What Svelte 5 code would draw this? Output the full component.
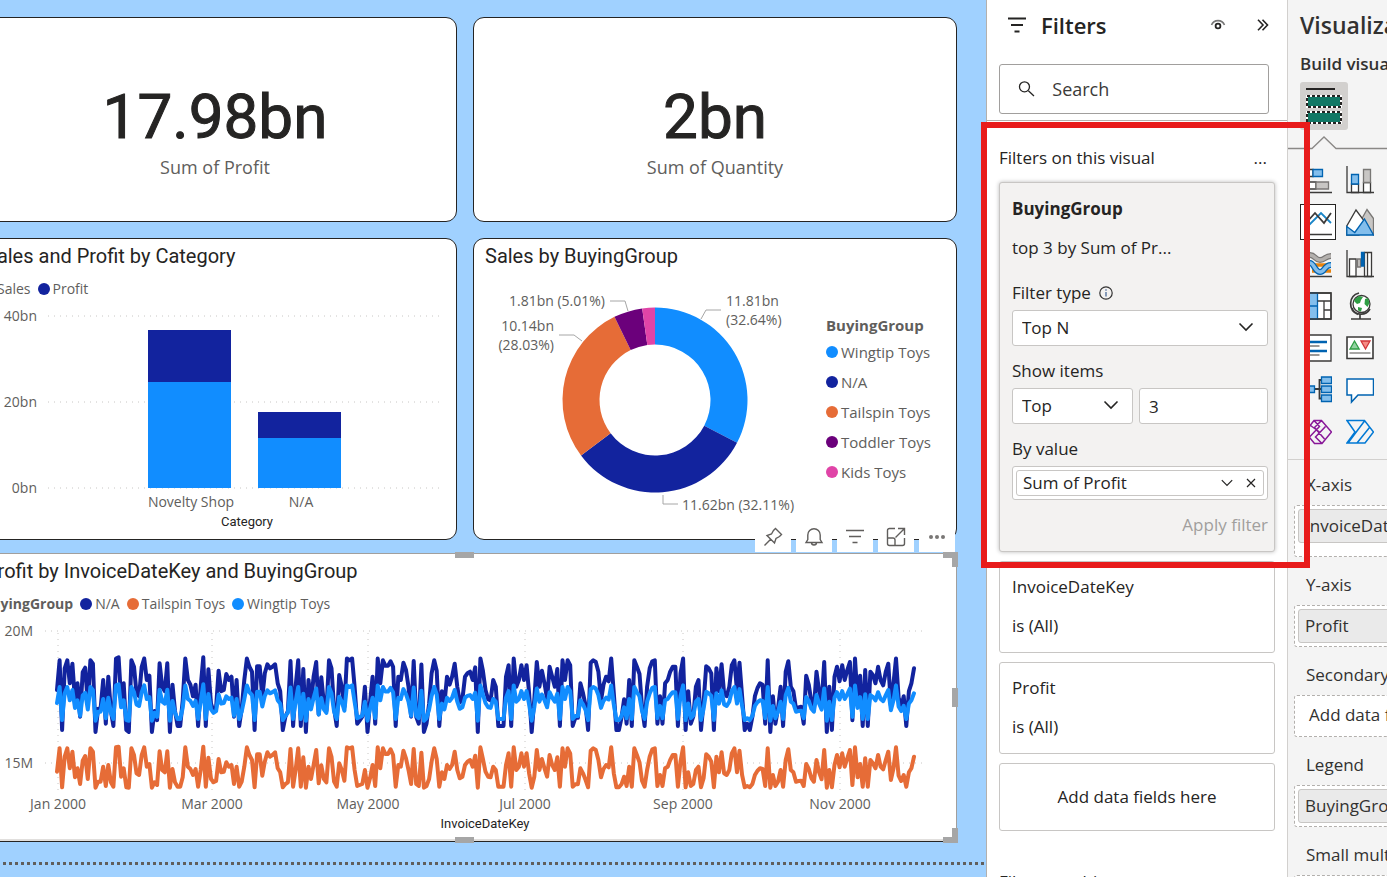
<script>
  const sky = '#118dff';
  const navy = '#12239e';
  const orange = '#e66c37';
  const purple = '#6b007b';
  const pink = '#e044a7';

  const barTicks = [
    { label: '40bn', y: 16 },
    { label: '20bn', y: 102 },
    { label: '0bn', y: 188 }
  ];
  const bars = [
    { label: 'Novelty Shop', x: 174, top: 30, split: 82 },
    { label: 'N/A', x: 284, top: 112, split: 138 }
  ];

  const groups = [
    { name: 'Wingtip Toys', share: 32.64, color: sky },
    { name: 'N/A', share: 32.11, color: navy },
    { name: 'Tailspin Toys', share: 28.03, color: orange },
    { name: 'Toddler Toys', share: 5.01, color: purple },
    { name: 'Kids Toys', share: 2.21, color: pink }
  ];

  function donutSlices(items, cx, cy, outer, inner) {
    let start = 0;
    return items.map((g) => {
      const end = start + g.share / 100;
      const at = (t, r) =>
        `${(cx + r * Math.sin(t * 2 * Math.PI)).toFixed(2)},${(cy - r * Math.cos(t * 2 * Math.PI)).toFixed(2)}`;
      const d = `M${at(start, outer)}A${outer},${outer} 0 0 1 ${at(end, outer)}L${at(end, inner)}A${inner},${inner} 0 0 0 ${at(start, inner)}Z`;
      start = end;
      return { d, color: g.color };
    });
  }
  const slices = donutSlices(groups, 181, 130, 92.5, 55.5);

  // One reading per day; higher means lower profit.
  const daily = [
    695,625,742,650,625,685,635,712,685,732,662,648,717,625,635,743,725,725,680,738,675,727,740,622,620,710,685,742,743,625,
    645,700,705,645,622,680,672,743,727,735,634,690,697,634,743,687,727,740,740,712,622,680,687,705,687,740,690,620,740,653,
    717,727,723,657,697,695,667,680,675,732,680,740,725,680,622,645,660,742,643,643,707,665,637,650,645,637,685,697,742,732,
    727,627,740,690,625,740,652,743,680,717,675,630,730,676,717,727,625,650,725,740,670,690,722,622,625,622,690,738,735,732,
    690,743,715,675,738,622,685,625,642,642,628,645,740,675,680,632,655,690,732,627,732,738,638,743,738,717,665,625,657,740,
    697,717,675,687,675,635,690,715,710,675,665,660,680,647,743,622,657,695,710,712,680,690,740,740,740,675,640,740,622,690,
    680,640,680,640,700,743,710,630,690,657,685,710,645,675,690,652,740,625,680,625,640,740,733,733,685,700,720,742,632,625,
    630,660,712,687,675,682,622,700,742,742,733,710,738,680,740,625,645,667,722,740,690,650,628,625,738,705,738,685,680,660,
    645,645,740,665,622,742,697,738,732,690,680,742,715,643,650,665,742,650,697,637,700,705,690,640,625,697,632,705,742,738,
    742,732,705,692,685,687,738,625,743,705,738,725,690,740,660,628,690,697,725,723,722,738,672,687,715,725,660,697,718,630,
    743,690,742,675,645,682,640,680,655,630,735,622,712,672,740,655,740,660,670,685,645,680,688,660,635,720,685,622,707,723,
    705,740,697,685,650
  ];
  const base = [620, 625, 635, 650, 675, 695, 710, 725, 732, 740, 743];
  const curves = {
    navy: [352, 361, 371, 385, 410, 450, 478, 506, 530, 558, 576],
    sky: [433, 441, 450, 460, 473, 489, 502, 515, 527, 537, 542]
  };
  function lookup(v, ys) {
    let i = 1;
    while (i < base.length - 1 && v > base[i]) i++;
    const t = (v - base[i - 1]) / (base[i] - base[i - 1]);
    return ys[i - 1] + t * (ys[i] - ys[i - 1]);
  }
  function trace(ys) {
    const step = 857 / (daily.length - 1);
    return daily
      .map((v, i) => `${(83 + i * step).toFixed(1)},${(lookup(v, ys) / 3 - 80).toFixed(1)}`)
      .join(' ');
  }
  const lines = [
    { color: navy, points: trace(curves.navy) },
    { color: orange, points: trace(base) },
    { color: sky, points: trace(curves.sky) }
  ];
  const months = [
    { label: 'Jan 2000', x: 84 },
    { label: 'Mar 2000', x: 238 },
    { label: 'May 2000', x: 394 },
    { label: 'Jul 2000', x: 551 },
    { label: 'Sep 2000', x: 709 },
    { label: 'Nov 2000', x: 866 }
  ];

  const wells = [
    { label: 'X-axis', chip: 'InvoiceDateKey', tall: true },
    { label: 'Y-axis', chip: 'Profit' },
    { label: 'Secondary y-axis' },
    { label: 'Legend', chip: 'BuyingGroup' },
    { label: 'Small multiples' }
  ];
  const visuals = [
    'Stacked bar chart', 'Stacked column chart', 'Line chart', 'Area chart', 'Ribbon chart', 'Waterfall chart', 'Treemap',
    'Map', 'Narrative', 'KPI', 'Decomposition tree', 'Q&A', 'Power Apps', 'Power Automate'
  ];

  let filterType = $state('Top N');
  let direction = $state('Top');
  let count = $state('3');
  let query = $state('');
  let picked = $state(2);
</script>

{#snippet chevron()}
  <svg class="chevron" width="16" height="10" viewBox="0 0 16 10" aria-hidden="true"><path d="M1.5 1.5 8 8l6.500-6.500" /></svg>
{/snippet}

<div class="app">
  <main class="report">
    <div class="board">
      <div class="pair">
        <section class="card kpi"><strong>17.98bn</strong><span>Sum of Profit</span></section>
        <section class="card kpi"><strong>2bn</strong><span>Sum of Quantity</span></section>
      </div>

      <div class="pair charts">
        <section class="card">
          <h2>Sales and Profit by Category</h2>
          <ul class="legend">
            <li><i style:background={sky}></i>Sales</li>
            <li><i style:background={navy}></i>Profit</li>
          </ul>
          <svg class="plot bars" height="236" viewBox="0 0 482 236" role="img" aria-label="Sales and Profit by Category">
            {#each barTicks as t}
              <line class="grid" x1="74" x2="468" y1={t.y} y2={t.y} />
              <text class="tick" x="63" y={t.y + 5} text-anchor="end">{t.label}</text>
            {/each}
            {#each bars as b}
              <rect x={b.x} y={b.top} width="83" height={b.split - b.top} fill={navy} />
              <rect x={b.x} y={b.split} width="83" height={188 - b.split} fill={sky} />
              <text class="tick" x={b.x + 43} y="207" text-anchor="middle">{b.label}</text>
            {/each}
            <text class="axis" x="273" y="226" text-anchor="middle">Category</text>
          </svg>
        </section>

        <section class="card">
          <h2>Sales by BuyingGroup</h2>
          <div class="donut">
            <svg class="plot" height="264" viewBox="0 0 345 264" role="img" aria-label="Sales by BuyingGroup">
              {#each slices as s}<path d={s.d} fill={s.color} />{/each}
              <g class="lead">
                <path d="M136 31h15l3 10" /><path d="M85 65h15l8 6" /><path d="M247 40h-15l-5 9" /><path d="M189 225v9h15" />
              </g>
              <text class="tick" x="131" y="36" text-anchor="end">1.81bn (5.01%)</text>
              <text class="tick" x="80" y="61" text-anchor="end">10.14bn</text>
              <text class="tick" x="80" y="80" text-anchor="end">(28.03%)</text>
              <text class="tick" x="252" y="36">11.81bn</text>
              <text class="tick" x="252" y="55">(32.64%)</text>
              <text class="tick" x="208" y="240">11.62bn (32.11%)</text>
            </svg>
            <div class="side">
              <b>BuyingGroup</b>
              <ul>
                {#each groups as g}<li><i style:background={g.color}></i>{g.name}</li>{/each}
              </ul>
            </div>
          </div>
        </section>
      </div>

      <section class="card selected">
        <h2>Profit by InvoiceDateKey and BuyingGroup</h2>
        <ul class="legend">
          <li><b>BuyingGroup</b></li>
          <li><i style:background={navy}></i>N/A</li>
          <li><i style:background={orange}></i>Tailspin Toys</li>
          <li><i style:background={sky}></i>Wingtip Toys</li>
        </ul>
        <svg class="plot" height="220" viewBox="0 0 982 220" role="img" aria-label="Profit by InvoiceDateKey and BuyingGroup">
          <text class="tick" x="59" y="16" text-anchor="end">20M</text>
          <text class="tick" x="59" y="148" text-anchor="end">15M</text>
          <line class="grid" x1="71" x2="950" y1="11" y2="11" />
          <line class="grid" x1="71" x2="950" y1="143" y2="143" />
          {#each months as m}
            <line class="grid" x1={m.x} x2={m.x} y1="13" y2="171" />
            <text class="tick" x={m.x} y="189" text-anchor="middle">{m.label}</text>
          {/each}
          {#each lines as l}<polyline class="line" points={l.points} stroke={l.color} />{/each}
          <text class="axis" x="511" y="208" text-anchor="middle">InvoiceDateKey</text>
        </svg>

        <div class="tools">
          <button aria-label="Pin visual"><svg width="20" height="20" viewBox="0 0 20 20"><path d="M12.500 1.500 18.500 7.500 16.500 9.500 13 11.500 11.500 16 4 8.500 8.500 7 10.500 3.500ZM7.700 12.300 1.500 18.500" /></svg></button>
          <button aria-label="Set alert"><svg width="20" height="20" viewBox="0 0 20 20"><path d="M2 15.500h16l-1.800-3V8a6.200 6.200 0 0 0-12.400 0v4.500ZM7.500 15.500a2.500 2.500 0 0 0 5 0" /></svg></button>
          <button aria-label="Filters on visual"><svg width="20" height="20" viewBox="0 0 20 20"><path d="M1 3.500h18M4 9.500h12M7.500 15.500h5" /></svg></button>
          <button aria-label="Focus mode"><svg width="20" height="20" viewBox="0 0 20 20"><path d="M9 1.500H3.500a2 2 0 0 0-2 2v13a2 2 0 0 0 2 2h13a2 2 0 0 0 2-2V11M1.500 11H7a2 2 0 0 1 2 2v5.500M12 1.500h6.500V8M18.500 1.500 9.500 10.500" /></svg></button>
          <button aria-label="More options"><svg width="20" height="20" viewBox="0 0 20 20"><g class="dots"><circle cx="4" cy="10" r="2" /><circle cx="10" cy="10" r="2" /><circle cx="16" cy="10" r="2" /></g></svg></button>
        </div>
        <span class="handle top"></span><span class="handle bottom"></span><span class="handle right"></span>
        <span class="corner ne"></span><span class="corner se"></span>
      </section>
      <div class="page-edge"></div>
    </div>
  </main>

  <aside class="filters">
    <header>
      <div class="heading">
        <svg width="20" height="16" viewBox="0 0 20 16" aria-hidden="true"><path d="M1 1.500h18M4 8h12M7.500 14.500h5" stroke="#252423" stroke-width="2" fill="none" /></svg>
        <h1>Filters</h1>
        <button aria-label="Show filter pane"><svg width="16" height="12" viewBox="0 0 16 12"><path d="M1.500 6a7 7 0 0 1 13 0" fill="none" stroke="#777" stroke-width="1.600" /><circle cx="8" cy="7" r="2.400" fill="none" stroke="#252423" stroke-width="1.800" /></svg></button>
        <button aria-label="Collapse"><svg width="12" height="12" viewBox="0 0 12 12"><path d="m1 .800 5 5.200-5 5.200M5.500.800l5 5.200-5 5.200" fill="none" stroke="#252423" stroke-width="1.600" /></svg></button>
      </div>
      <label class="search">
        <svg width="20" height="20" viewBox="0 0 20 20" aria-hidden="true"><circle cx="7.500" cy="7.500" r="5.800" /><path d="m12 12 6.500 6" /></svg>
        <input type="text" placeholder="Search" aria-label="Search" bind:value={query} />
      </label>
    </header>

    <div class="list">
      <div class="section"><span>Filters on this visual</span><button aria-label="Section options">...</button></div>

      <section class="filter open">
        <b>BuyingGroup</b>
        <p>top 3 by Sum of Pr...</p>
        <label class="name" for="type">Filter type
          <svg width="14" height="14" viewBox="0 0 14 14" aria-hidden="true"><circle cx="7" cy="7" r="6.200" fill="none" stroke="#333" stroke-width="1.200" /><path d="M7 6v4.500M7 3.300v1.400" stroke="#4a6a9a" stroke-width="1.300" /></svg>
        </label>
        <div class="select">
          <select id="type" bind:value={filterType}><option>Top N</option><option>Basic filtering</option></select>
          {@render chevron()}
        </div>
        <label class="name" for="dir">Show items</label>
        <div class="row">
          <div class="select half">
            <select id="dir" bind:value={direction}><option>Top</option><option>Bottom</option></select>
            {@render chevron()}
          </div>
          <input class="count" type="text" aria-label="Item count" bind:value={count} />
        </div>
        <span class="name">By value</span>
        <div class="value">
          <div class="chip">
            <span>Sum of Profit</span>
            <button aria-label="Aggregation"><svg width="12" height="8" viewBox="0 0 12 8"><path d="M.800 1.200 6 6.500l5.200-5.300" /></svg></button>
            <button aria-label="Remove field"><svg width="10" height="10" viewBox="0 0 10 10"><path d="m1 1 8 8M9 1 1 9" /></svg></button>
          </div>
        </div>
        <button class="apply" disabled>Apply filter</button>
      </section>

      <section class="filter"><span>InvoiceDateKey</span><p>is (All)</p></section>
      <section class="filter"><span>Profit</span><p>is (All)</p></section>
      <div class="drop">Add data fields here</div>
      <div class="section next"><span>Filters on this page</span><button aria-label="Page section options">...</button></div>
    </div>
    <div class="callout"></div>
  </aside>

  <aside class="viz">
    <h1>Visualizations</h1>
    <h3>Build visual</h3>
    <button class="build" aria-label="Build visual">
      <svg width="36" height="38" viewBox="0 0 36 38">
        <path d="M0 2h29" stroke="#252423" stroke-width="2" />
        <rect x="1" y="9" width="34" height="11" fill="#117865" stroke="#fff" stroke-width="2" /><rect x="1" y="9" width="34" height="11" fill="none" stroke="#252423" stroke-width="2" stroke-dasharray="3 2" />
        <rect x="1" y="25" width="34" height="11" fill="#117865" stroke="#fff" stroke-width="2" /><rect x="1" y="25" width="34" height="11" fill="none" stroke="#252423" stroke-width="2" stroke-dasharray="3 2" />
      </svg>
    </button>
    <svg class="pointer" width="340" height="14" viewBox="0 0 340 14" aria-hidden="true"><path d="M0 12.500h24L36 1l12 11.500h292" fill="none" stroke="#8a8886" stroke-width="1.300" /></svg>

    <div class="gallery">
      {#each visuals as name, i}
        <button class:picked={picked === i} aria-label={name} onclick={() => (picked = i)}>
          <svg width="28" height="28" viewBox="0 0 28 28" fill="none" stroke-width="1.300" stroke="#3b3a39">
            {#if i === 0}
              <path d="M1 1v25.500h27" /><path d="M1 3.500h8v7H1M1 16h11v7H1" fill="#fff" /><path d="M9 3.500h9.500v7H9z" fill="#83beec" stroke="#0063b1" /><path d="M12 16h12.500v7H12z" fill="#c8c6c4" stroke="#797775" />
            {:else if i === 1}
              <path d="M5.500 18h7v8.500h-7zM17.500 16.500h7v10h-7z" fill="#fff" /><path d="M5.500 8.500h7v9.500h-7z" fill="#83beec" stroke="#0063b1" /><path d="M17.500 3.500h7v13h-7z" fill="#c8c6c4" stroke="#797775" /><path d="M1 0v26.500h27" />
            {:else if i === 2}
              <path d="M1 1v25.500h27" /><path d="m2 20 15-15 10 10" stroke="#1a86c8" stroke-width="1.800" /><path d="M2 15 11 5l9 10 7-10" stroke-width="1.800" />
            {:else if i === 3}
              <path d="m14 14 7-12.500 6.500 9V27z" fill="#c8c6c4" stroke="#797775" /><path d="M.800 27V18L10 2l9 12-6 13z" fill="#fff" /><path d="M.800 27V18.500l8 6L18.500 11l9 16z" fill="#83beec" stroke="#0063b1" />
            {:else if i === 4}
              <path d="M8 15h19M8 21h19" stroke="#e8820c" stroke-width="3.500" />
              <path d="M1 5h5c5 0 5 5 10 5s5-4 11-4" stroke="#797775" stroke-width="6" /><path d="M1 5h5c5 0 5 5 10 5s5-4 11-4" stroke="#b3b0ad" stroke-width="3.500" />
              <path d="M1 13h5c4 0 5 9 10 9s4-7 11-7" stroke="#0063b1" stroke-width="6" /><path d="M1 13h5c4 0 5 9 10 9s4-7 11-7" stroke="#83beec" stroke-width="3.500" />
              <path d="M1 1v25.500h27" />
            {:else if i === 5}
              <path d="M3.500 9h6.500v17.500H3.500zM18.500 2.500h7v24h-7zM21.500 2.500v24" fill="#fff" /><path d="M11.500 9h3v8h-3z" fill="#c8c6c4" stroke="#797775" /><path d="M15.500 2.500H18v13.500h-2.500z" fill="#0063b1" stroke="#0063b1" /><path d="M1 0v26.500h27" />
            {:else if i === 6}
              <path d="M1 1h26v26H1z" fill="#fff" /><path d="M1 1h12.500v26H1zM1 14h12.500" fill="#83beec" stroke="#0063b1" /><path d="M1 1h26v26H1zM13.500 9H27M20 9v18M20 18h7" />
            {:else if i === 7}
              <circle cx="15.500" cy="12" r="8.500" fill="#fff" /><path d="m9 7 4-3 4 1-2 3-1 3-3 1-3-3zM19 7l3-1 1.500 5-2 4-3-3zM12 15l4 1-1 3.500-3-1z" fill="#2f9e44" stroke="none" /><path d="M13 1C2 4 2 18 12 22.500M6 16c2 7 13 9 18 1M14 23v4M5 27h20" stroke-width="1.700" />
            {:else if i === 8}
              <path d="M1 1h26v26H1z" fill="#fff" /><path d="M5 8h18M5 17h18" stroke="#0063b1" stroke-width="2.600" /><path d="M5 12h10.500M5 21h10.500" stroke="#797775" stroke-width="1.500" />
            {:else if i === 9}
              <path d="M1 3h26v21.500H1z" fill="#fff" stroke-width="1.600" /><path d="m8.500 7 4.700 8H4z" fill="#92d3a1" stroke="#2f9e44" /><path d="M15 7h9l-4.500 8z" fill="#f58b85" stroke="#d13438" /><path d="M3.500 19h21" stroke="#797775" />
            {:else if i === 10}
              <path d="M10 13h5.500M18 4h-2.500v18.500H18M15.500 13H18" stroke-width="1.800" /><path d="M1 10h9.500v6.500H1zM17.500 1h10v6.500h-10zM17.500 10h10v6.500h-10zM17.500 19h10v6.500h-10z" fill="#83beec" stroke="#0063b1" />
            {:else if i === 11}
              <path d="M1 3h26.500v16H12l-6.500 7V19H1z" fill="#fff" stroke="#0063b1" stroke-width="1.500" />
            {:else if i === 12}
              <path d="M1 14 10 2.500h7.500L27.500 14 18 25.500h-7.500zM10 2.500l5.500 6L5.500 19M17.500 2.500l-7 7L20.500 21M21.500 8.500 11.500 19l6 6M15.500 14l-9-6.500" stroke="#881798" stroke-width="1.500" />
            {:else}
              <path d="M1 2.500h17.500L27.500 14 19 25H1l8-11zM18.500 3 2 25M23.500 9.500 11 25" stroke="#0078d4" stroke-width="1.500" />
            {/if}
          </svg>
        </button>
      {/each}
    </div>

    <div class="wells">
      {#each wells as w}
        <div class="field">
          <span>{w.label}</span>
          <div class="well" class:tall={w.tall}>
            {#if w.chip}<div class="token">{w.chip}</div>{:else}<p>Add data fields here</p>{/if}
          </div>
        </div>
      {/each}
    </div>
  </aside>
</div>

<style>
  :global(body) { margin: 0; overflow: hidden; }
  .app { display: flex; height: 100vh; overflow: hidden; color: #252423; font: 17px/24px 'Open Sans', sans-serif; }
  .app * { box-sizing: border-box; }
  h1, h2, h3, p, ul { margin: 0; padding: 0; font-weight: 400; }
  ul { list-style: none; }
  button { border: 0; padding: 0; background: none; font: inherit; color: inherit; display: flex; align-items: center; justify-content: center; }

  .report { flex: 1; min-width: 0; background: #a0d1ff; overflow: hidden; }
  .board { margin-left: -27px; padding: 17px 29px 0 0; display: flex; flex-direction: column; }
  .pair { display: grid; grid-template-columns: 1fr 1fr; gap: 16px; height: 205px; margin-bottom: 16px; }
  .pair.charts { height: 302px; margin-bottom: 13px; }
  .card { background: #fff; border: 1px solid #252423; border-radius: 11px; min-width: 0; }
  .kpi { display: flex; flex-direction: column; align-items: center; padding-top: 61px; }
  .kpi strong { font: 400 62px/76px Roboto, sans-serif; -webkit-text-stroke: 1px #252423; }
  .kpi span { color: #605e5c; font-size: 18px; line-height: 24px; }
  .card h2 { font: 20px/24px Roboto, sans-serif; padding: 5px 11px; white-space: nowrap; }
  .legend { display: flex; gap: 7px; padding: 6px 8px; font-size: 14px; line-height: 20px; color: #605e5c; }
  li { display: flex; align-items: center; gap: 3px; }
  i { width: 12px; height: 12px; border-radius: 50%; flex: none; }
  .plot { display: block; width: 100%; }
  .bars { margin-top: -5px; }
  .tick { font: 14px 'Open Sans', sans-serif; fill: #605e5c; }
  .axis { font: 13px Roboto, sans-serif; fill: #252423; }
  .grid { stroke: #c8c6c4; stroke-dasharray: 1 5; }
  .line { fill: none; stroke-width: 4; stroke-linejoin: round; stroke-linecap: round; }
  .lead { fill: none; stroke: #a6a6a6; }
  .donut { display: flex; margin-top: -3px; }
  .donut .plot { flex: 1; min-width: 0; }
  .side { width: 137px; flex: none; padding: 43px 0 0 7px; font-size: 15px; line-height: 24px; color: #605e5c; white-space: nowrap; }
  .side ul { display: grid; gap: 6px; padding-top: 3px; }

  .selected { position: relative; height: 289px; border-color: #a19f9d #a19f9d #252423; border-radius: 0; box-shadow: inset 0 -2px #e1dfdd; }
  .tools { position: absolute; right: 1px; top: -33px; display: flex; gap: 5px; }
  .tools button { width: 36px; height: 31px; background: #fff; }
  .tools svg { fill: none; stroke: #605e5c; stroke-width: 1.400; }
  .tools .dots { fill: #797775; stroke: none; }
  .handle, .corner { position: absolute; background: #a6a6a6; }
  .handle.top, .handle.bottom { width: 19px; height: 6px; left: 50%; margin-left: -10px; }
  .top { top: -2px; }
  .bottom { bottom: -2px; }
  .handle.right { width: 6px; height: 19px; right: -2px; top: 134px; }
  .corner { width: 15px; height: 15px; right: -2px; background: none; border: 0 solid #a6a6a6; border-right-width: 6px; }
  .ne { top: -2px; border-top-width: 6px; }
  .se { bottom: -2px; border-bottom-width: 6px; }
  .page-edge { height: 3px; margin: 20px -27px 0 0; background: repeating-linear-gradient(90deg, #605e5c 0 3px, transparent 3px 6px); }

  .filters { position: relative; z-index: 1; width: 301px; flex: none; border-left: 1px solid #b3b0ad; background: #fff; }
  header { height: 121px; border-bottom: 1px solid #b3b0ad; padding: 9px 18px 0 12px; }
  .heading { display: flex; align-items: center; height: 32px; padding-left: 8px; }
  h1 { font-size: 22px; line-height: 32px; font-weight: 600; }
  .heading h1 { flex: 1; padding-left: 14px; }
  .heading button + button { margin: 0 0 0 31px; }
  .search { display: flex; align-items: center; gap: 17px; margin-top: 23px; height: 50px; padding-left: 18px; border: 1px solid #a19f9d; border-radius: 3px; }
  .search svg { fill: none; stroke: #252423; stroke-width: 1.500; }
  input { border: 0; padding: 0; min-width: 0; width: 100%; outline: 0; font: inherit; font-size: 18px; color: inherit; background: none; }
  input::placeholder { color: #3b3a39; opacity: 1; }
  .list { padding: 25px 12px 0; display: flex; flex-direction: column; }
  .section { display: flex; justify-content: space-between; padding-right: 8px; margin-bottom: 12px; }
  .section.next { margin-top: 39px; }
  .filter { height: 92px; margin-bottom: 9px; border: 1px solid #c8c6c4; border-radius: 3px; padding: 13px 12px; display: flex; flex-direction: column; }
  .filter p { margin-top: 15px; }
  .filter.open { height: 370px; padding: 14px 6px 0 12px; background: #f3f2f1; box-shadow: 0 0 4px #bbb; }
  .name { display: flex; align-items: center; gap: 8px; }
  label.name[for='type'] { margin-top: 21px; }
  .open .name { margin-bottom: 5px; }
  .select { position: relative; height: 36px; margin-bottom: 13px; }
  select, .count { width: 100%; height: 36px; appearance: none; border: 1px solid #c8c6c4; border-radius: 3px; background: #fff; padding: 0 9px; font: inherit; color: inherit; }
  .chevron { position: absolute; right: 14px; top: 12px; fill: none; stroke: #252423; stroke-width: 1.600; pointer-events: none; }
  .row { display: flex; gap: 6px; }
  .half { width: 121px; flex: none; }
  .value { border: 1px solid #c8c6c4; border-radius: 3px; background: #fff; padding: 3px; height: 34px; }
  .chip { display: flex; align-items: center; gap: 13px; height: 26px; border: 1px solid #c8c6c4; border-radius: 3px; padding: 0 7px 0 6px; }
  .chip span { flex: 1; }
  .chip svg { fill: none; stroke: #252423; stroke-width: 1.200; }
  .apply { align-self: flex-end; margin-top: 13px; color: #a19f9d; }
  .drop { height: 68px; display: flex; align-items: center; justify-content: center; border: 1px solid #c8c6c4; border-radius: 3px; }
  .callout { position: absolute; left: -6px; right: -23px; top: 122px; height: 446px; border: 6px solid #e81b1b; pointer-events: none; }

  .viz { width: 100px; flex: none; overflow: hidden; border-left: 1px solid #d2d0ce; background: #f4f4f4; color: #323130; white-space: nowrap; }
  .viz h1 { padding: 9px 0 0 12px; font-size: 23px; }
  .viz h3 { font-size: 17px; line-height: 24px; font-weight: 600; padding: 11px 0 6px 12px; }
  .build { width: 48px; height: 48px; margin-left: 12px; background: #d2d0ce; border-radius: 3px; }
  .pointer { display: block; margin-top: 6px; }
  .gallery { display: grid; grid-template-columns: 36px 36px; gap: 6px; padding: 12px 12px 9px; border-bottom: 1px solid #d2d0ce; }
  .gallery button { height: 36px; }
  .gallery .picked { outline: 1px solid #252423; outline-offset: -1px; background: #fff; }
  .wells { padding: 13px 0 0 6px; }
  .field > span { display: block; padding-left: 12px; height: 32px; line-height: 24px; }
  .well { width: 300px; height: 42px; margin-bottom: 16px; padding: 3px; border: 1px dashed #b3b0ad; border-radius: 3px; background: #fff; }
  .well.tall { height: 52px; }
  .token { height: 34px; line-height: 32px; padding-left: 6px; border: 1px solid #c8c6c4; border-radius: 3px; background: #eaeaea; }
  .well p { line-height: 32px; padding-left: 11px; }
</style>
